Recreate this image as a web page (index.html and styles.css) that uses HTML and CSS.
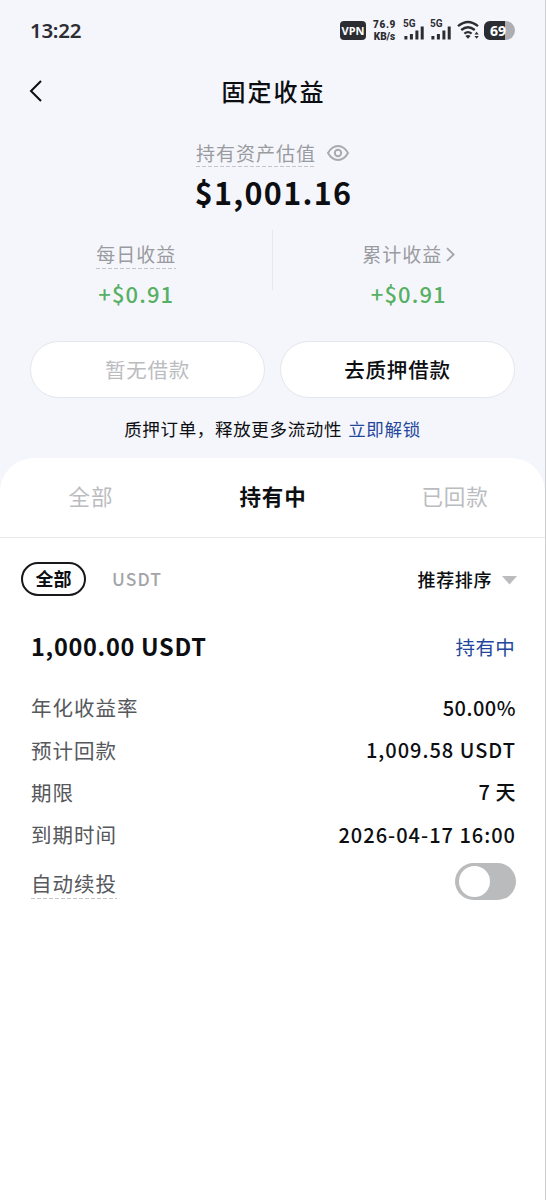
FILE: index.html
```html
<!DOCTYPE html>
<html lang="zh-CN">
<head>
<meta charset="utf-8">
<title>固定收益</title>
<link rel="stylesheet" href="styles.css">
</head>
<body>
<div class="screen">
  <div class="status">
    <span class="clock">13:22</span>
    <div class="indicators">
      <span class="vpn">VPN</span>
      <span class="speed"><b>76.9</b><b>KB/s</b></span>
      <span class="signal"><i>5G</i><svg width="22" height="22" viewBox="0 0 22 22"><path d="M2.9 17v3.4M8.4 15v5.4M13.9 11.5v8.9M19.2 7.6v12.8" class="bars"/></svg></span>
      <span class="signal"><i>5G</i><svg width="22" height="22" viewBox="0 0 22 22"><path d="M2.9 17v3.4M8.4 15v5.4M13.9 11.5v8.9M19.2 7.6v12.8" class="bars"/></svg></span>
      <svg class="wifi" width="23" height="20" viewBox="0 0 23 20"><path d="M1 6.2Q11 -2.2 21 6.2M4.2 10Q11 4.4 17.8 10M7.4 13.6Q11 10.6 14.6 13.6" class="wave"/><path d="M8.4 16Q11 14.2 13.6 16L11 18.8ZM17.4 14.6l2.2-2.8 2.2 2.8zM17.4 15.9l2.2 2.8 2.2-2.8z" class="solid"/></svg>
      <span class="battery">69</span>
    </div>
  </div>
  <div class="nav">
    <svg class="back" width="14" height="24" viewBox="0 0 14 24"><path d="M12 2 2 12l10 10"/></svg>
    <h1 class="title">固定收益</h1>
  </div>
  <div class="valuation">
    <span class="label dotted">持有资产估值</span>
    <svg class="eye" width="22" height="18" viewBox="0 0 22 18"><path d="M1 9Q5 2 11 2T21 9Q17 16 11 16T1 9Z"/><circle cx="11" cy="9" r="3.2"/></svg>
  </div>
  <div class="total">$1,001.16</div>
  <div class="stats">
    <div class="stat"><div class="stat-label"><span class="label dotted">每日收益</span></div><div class="gain">+$0.91</div></div>
    <div class="stat"><div class="stat-label"><span class="label">累计收益</span><svg class="more" width="9" height="15" viewBox="0 0 9 15"><path d="m1 1.2 6.6 6.3L1 13.8"/></svg></div><div class="gain">+$0.91</div></div>
  </div>
  <div class="actions">
    <button class="pill off">暂无借款</button>
    <button class="pill">去质押借款</button>
  </div>
  <div class="notice"><span>质押订单，释放更多流动性</span><a class="link">立即解锁</a></div>
  <div class="sheet">
    <div class="tabs">
      <span class="tab">全部</span><span class="tab on">持有中</span><span class="tab">已回款</span>
    </div>
    <div class="filters">
      <span class="chip">全部</span><span class="coin">USDT</span>
      <span class="sort">推荐排序</span><svg class="arrow" width="15" height="9" viewBox="0 0 15 9"><path d="M0 0h15L7.5 8.5z" class="caret"/></svg>
    </div>
    <div class="order">
      <div class="head"><span class="amount">1,000.00 USDT</span><span class="state">持有中</span></div>
      <div class="row"><span class="key">年化收益率</span><span class="val rate">50.00%</span></div>
      <div class="row"><span class="key">预计回款</span><span class="val payout">1,009.58 USDT</span></div>
      <div class="row"><span class="key">期限</span><span class="val">7 天</span></div>
      <div class="row"><span class="key">到期时间</span><span class="val date">2026-04-17 16:00</span></div>
      <div class="row renew"><span class="key dotted">自动续投</span><span class="toggle"><span class="knob"></span></span></div>
    </div>
  </div>
</div>
</body>
</html>
```
FILE: styles.css
```css
* { box-sizing: border-box; }
body {
  margin: 0;
  background: #f5f6fb;
  color: #0c0e12;
  font-family: "Noto Sans CJK SC", sans-serif;
}
svg { display: block; fill: none; flex: none; }
.screen {
  width: 546px;
  height: 1200px;
  border-right: 1px solid #cfcfd2;
  display: flex;
  flex-direction: column;
  overflow: hidden;
  white-space: nowrap;
}
.status {
  height: 60px;
  flex: none;
  padding: 0 30px 0 30px;
  display: flex;
  align-items: center;
  justify-content: space-between;
  color: #2c2d33;
}
.clock { font: 600 20.5px/30px "Noto Sans", sans-serif; letter-spacing: -.3px; margin-top: -1px; }
.indicators { display: flex; align-items: center; }
.vpn {
  width: 26px;
  height: 19px;
  border-radius: 4px;
  background: #2c2d33;
  color: #fff;
  font: 700 11px/19px "Noto Sans", sans-serif;
  text-align: center;
}
.speed {
  width: 23px;
  margin: 1px 7px 0 7px;
  display: flex;
  flex-direction: column;
  align-items: center;
  font: 700 10px/12px Roboto, sans-serif;
}
.speed b:first-child { letter-spacing: .7px; }
.signal { display: grid; width: 22px; margin-right: 5px; }
.signal i { grid-area: 1/1; font: 700 10px/10px Roboto, sans-serif; }
.signal svg { grid-area: 1/1; }
.bars { stroke: #2c2d33; stroke-width: 3; }
.wifi { margin-right: 4px; }
.wave { stroke: #2c2d33; stroke-width: 2.3; }
.solid { fill: #2c2d33; }
.battery {
  width: 31px;
  height: 19px;
  border-radius: 6px 10px 10px 6px;
  background: linear-gradient(90deg, #2c2d33 21px, #adaeb3 21px);
  color: #fff;
  font: 700 14px/19px "Noto Sans", sans-serif;
  padding-left: 6px;
}
.nav {
  height: 62px;
  flex: none;
  display: grid;
  grid-template-columns: 30px 1fr 30px;
  align-items: center;
}
.back { justify-self: end; margin-right: -13px; }
.back path { stroke: #0c0e12; stroke-width: 2; }
.title { margin: 0; font-size: 24px; font-weight: 500; letter-spacing: 2px; line-height: 36px; text-align: center; padding-left: 2px; }
.valuation { height: 50px; flex: none; display: flex; justify-content: center; gap: 11px; padding-top: 17px; }
.label { color: #9a9ba0; font-size: 19px; letter-spacing: 1px; line-height: 27px; height: 28px; }
.dotted {
  background: repeating-linear-gradient(90deg, #c4c5ca 0 4px, transparent 4px 6px) bottom / 100% 1px no-repeat;
}
.eye { margin-top: 5px; }
.eye path, .eye circle { stroke: #a9aaaf; stroke-width: 2; }
.total { height: 58px; flex: none; font-size: 30.5px; font-weight: 700; line-height: 40px; text-align: center; letter-spacing: 1.3px; padding-left: 2px; }
.stats {
  height: 111px;
  flex: none;
  display: grid;
  grid-template-columns: 1fr 1fr;
  background: linear-gradient(#e7e8ef, #e7e8ef) 272px 0 / 1px 60px no-repeat;
}
.stat { text-align: center; }
.stat .label { line-height: 25px; }
.stat-label { height: 48px; padding-top: 11px; display: flex; justify-content: center; gap: 4px; }
.more { margin-top: 6px; }
.more path { stroke: #a4a5aa; stroke-width: 1.8; }
.gain { color: #57b063; font-size: 22px; font-weight: 500; line-height: 30px; letter-spacing: 1.1px; }
.actions { height: 57px; flex: none; display: grid; grid-template-columns: 235px 235px; gap: 15px; padding-left: 30px; }
.pill {
  border: 1px solid #e5e6eb;
  border-radius: 29px;
  background: #fff;
  color: #0c0e12;
  font: 500 20.5px/55px "Noto Sans CJK SC", sans-serif;
  letter-spacing: .8px;
  padding: 0;
}
.off { color: #bbbcbf; font-weight: 400; }
.notice { height: 60px; flex: none; display: flex; justify-content: center; gap: 6px; font-size: 17.5px; letter-spacing: .67px; line-height: 62px; }
.link { color: #24479d; }
.sheet { flex: 1; background: #fff; border-radius: 34px 34px 0 0; }
.tabs {
  height: 80px;
  border-bottom: 1px solid #e9e9eb;
  display: grid;
  grid-template-columns: repeat(3, 182px);
  text-align: center;
  font-size: 21.5px;
  letter-spacing: .9px;
  line-height: 76px;
  color: #bbbcbf;
}
.on { color: #0c0e12; font-weight: 700; }
.filters { height: 83px; display: flex; align-items: center; padding: 0 28px 2px 21px; }
.chip {
  width: 65px;
  height: 34px;
  border: 2px solid #16181c;
  border-radius: 17px;
  font-size: 18px;
  font-weight: 600;
  line-height: 29px;
  text-align: center;
}
.coin { margin-left: 26px; color: #a3a4a8; font-size: 17.5px; font-weight: 500; letter-spacing: 1.1px; }
.sort { margin-left: auto; margin-right: 10px; font-size: 18px; font-weight: 500; letter-spacing: .6px; }
.arrow { margin-top: 3px; }
.caret { fill: #bcbcbe; }
.order { padding: 0 30px 0 31px; }
.head { height: 65px; display: flex; justify-content: space-between; line-height: 50px; }
.amount { font-size: 23.5px; font-weight: 700; letter-spacing: .7px; }
.state { font-size: 19.5px; color: #24479d; letter-spacing: .3px; margin-top: 1px; }
.row { height: 42.4px; display: flex; justify-content: space-between; align-items: center; }
.key { color: #56585c; font-size: 20.5px; letter-spacing: 1px; line-height: 28px; }
.val { font-size: 20px; font-weight: 500; letter-spacing: .5px; margin-right: -1px; }
.payout, .date { letter-spacing: 1px; }
.renew { height: 51px; }
.renew .key { height: 30px; margin-top: 5px; }
.toggle { width: 61px; height: 37px; border-radius: 19px; background: #b9bbbd; padding: 3px 4px; margin-right: -1px; }
.knob { display: block; width: 31px; height: 31px; border-radius: 50%; background: #fff; }
```
